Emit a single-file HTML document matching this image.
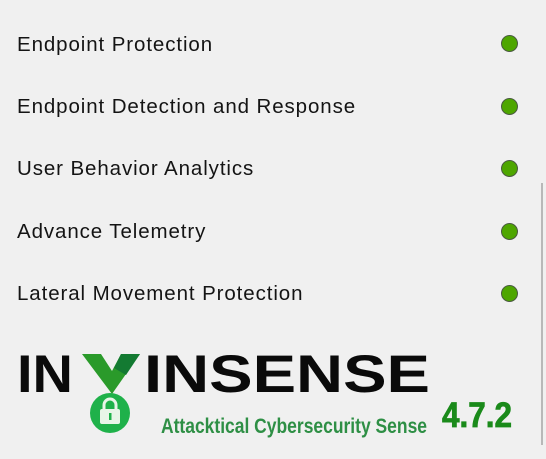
<!DOCTYPE html>
<html><head><style>
html,body{margin:0;padding:0;width:546px;height:459px;background:#f0f0f0;overflow:hidden;position:relative;font-family:"Liberation Sans",sans-serif}
.row{position:absolute;left:17px;font-size:20.5px;letter-spacing:0.9px;color:#141414;line-height:22px}
.dot{position:absolute;left:501px;width:17px;height:17px;border-radius:50%;background:#4ea600;border:1px solid #4a5a40;box-sizing:border-box}
.vline{position:absolute;left:541px;top:183px;width:2px;height:262px;background:#b8b8b8}
</style></head><body>
<div class="row" style="top:34px">Endpoint Protection</div>
<div class="row" style="top:96px">Endpoint Detection and Response</div>
<div class="row" style="top:158px">User Behavior Analytics</div>
<div class="row" style="top:221px">Advance Telemetry</div>
<div class="row" style="top:283px">Lateral Movement Protection</div>
<div class="dot" style="top:35px"></div>
<div class="dot" style="top:98px"></div>
<div class="dot" style="top:160px"></div>
<div class="dot" style="top:223px"></div>
<div class="dot" style="top:285px"></div>
<div class="vline"></div>
<svg width="546" height="459" style="position:absolute;left:0;top:0">
<text x="17" y="392" font-family="Liberation Sans" font-weight="bold" font-size="53" textLength="56" lengthAdjust="spacingAndGlyphs" fill="#0a0a0a">IN</text>
<text x="144" y="392" font-family="Liberation Sans" font-weight="bold" font-size="53" textLength="286" lengthAdjust="spacingAndGlyphs" fill="#0a0a0a">INSENSE</text>
<polygon points="82,354 101,354 112,371 121,354 140,354 112,394" fill="#2a9a2a"/>
<polygon points="121,354 140,354 126,375 114,368" fill="#137a32"/>
<circle cx="110" cy="413" r="20" fill="#1fb14a"/>
<path d="M104,410 v-5 a6,6 0 0 1 12,0 v5" fill="none" stroke="#e8f5e8" stroke-width="3"/>
<rect x="100" y="409" width="20" height="15" rx="2" fill="#e8f5e8"/>
<rect x="109" y="413" width="2.5" height="7" fill="#1fb14a"/>
<text x="161" y="433" font-family="Liberation Sans Narrow, Liberation Sans" font-weight="bold" font-size="21" textLength="266" lengthAdjust="spacingAndGlyphs" fill="#2e8f45">Attacktical Cybersecurity Sense</text>
<text x="442" y="427" font-family="Liberation Sans" font-weight="bold" font-size="35" textLength="70" lengthAdjust="spacingAndGlyphs" fill="#1a8a1a" stroke="#1a8a1a" stroke-width="0.8">4.7.2</text>
</svg>
</body></html>
